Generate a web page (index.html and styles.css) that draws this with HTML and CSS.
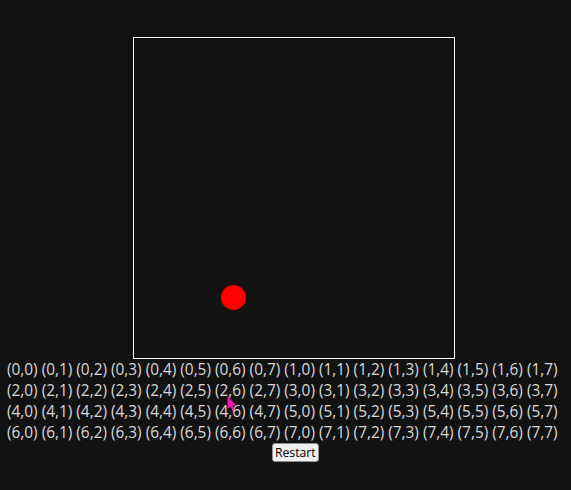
FILE: index.html
```html
<!DOCTYPE html>
<html>
<head>
<meta charset="utf-8">
<link rel="stylesheet" href="styles.css">
</head>
<body>
<div class="page">
  <div class="board">
    <div class="ball"></div>
  </div>
  <div class="cells">
    <div class="row">(0,0) (0,1) (0,2) (0,3) (0,4) (0,5) (0,6) (0,7) (1,0) (1,1) (1,2) (1,3) (1,4) (1,5) (1,6) (1,7)</div>
    <div class="row">(2,0) (2,1) (2,2) (2,3) (2,4) (2,5) (2,6) (2,7) (3,0) (3,1) (3,2) (3,3) (3,4) (3,5) (3,6) (3,7)</div>
    <div class="row">(4,0) (4,1) (4,2) (4,3) (4,4) (4,5) (4,6) (4,7) (5,0) (5,1) (5,2) (5,3) (5,4) (5,5) (5,6) (5,7)</div>
    <div class="row">(6,0) (6,1) (6,2) (6,3) (6,4) (6,5) (6,6) (6,7) (7,0) (7,1) (7,2) (7,3) (7,4) (7,5) (7,6) (7,7)</div>
  </div>
  <div class="actions"><button class="restart">Restart</button></div>
  <svg class="cursor" width="11" height="17" viewBox="0 0 11 17"><path d="M0.5 0.5 L0.5 13 L3.5 10.2 L5.6 15 L7.4 14.2 L5.4 9.6 L9.5 9.6 Z" fill="#ff12b8"/></svg>
</div>
</body>
</html>
```
FILE: styles.css
```css
html, body {
  margin: 0;
  padding: 0;
  background: #121212;
}
.page {
  position: relative;
  width: 571px;
  height: 490px;
  padding-top: 37px;
  box-sizing: border-box;
  font-family: "Open Sans", "Noto Sans", sans-serif;
  color: #d8d8d8;
}
.board {
  position: relative;
  width: 320px;
  height: 320px;
  margin-left: 133px;
  border: 1px solid #ffffff;
  background: #121212;
}
.ball {
  position: absolute;
  left: 87px;
  top: 247px;
  width: 25px;
  height: 25px;
  border-radius: 50%;
  background: #ff0000;
}
.cells {
  padding-left: 7px;
  font-size: 15.4px;
  line-height: 21px;
  white-space: nowrap;
}
.actions {
  display: flex;
  padding-left: 272px;
}
.restart {
  display: block;
  font-family: "Open Sans", "Noto Sans", sans-serif;
  font-size: 12.2px;
  line-height: 15px;
  height: 19px;
  padding: 0 2px;
  color: #000;
  background: #efefef;
  border: 1px solid #8f8f8f;
  border-radius: 3px;
}
.cursor {
  position: absolute;
  left: 227px;
  top: 396px;
}
```
